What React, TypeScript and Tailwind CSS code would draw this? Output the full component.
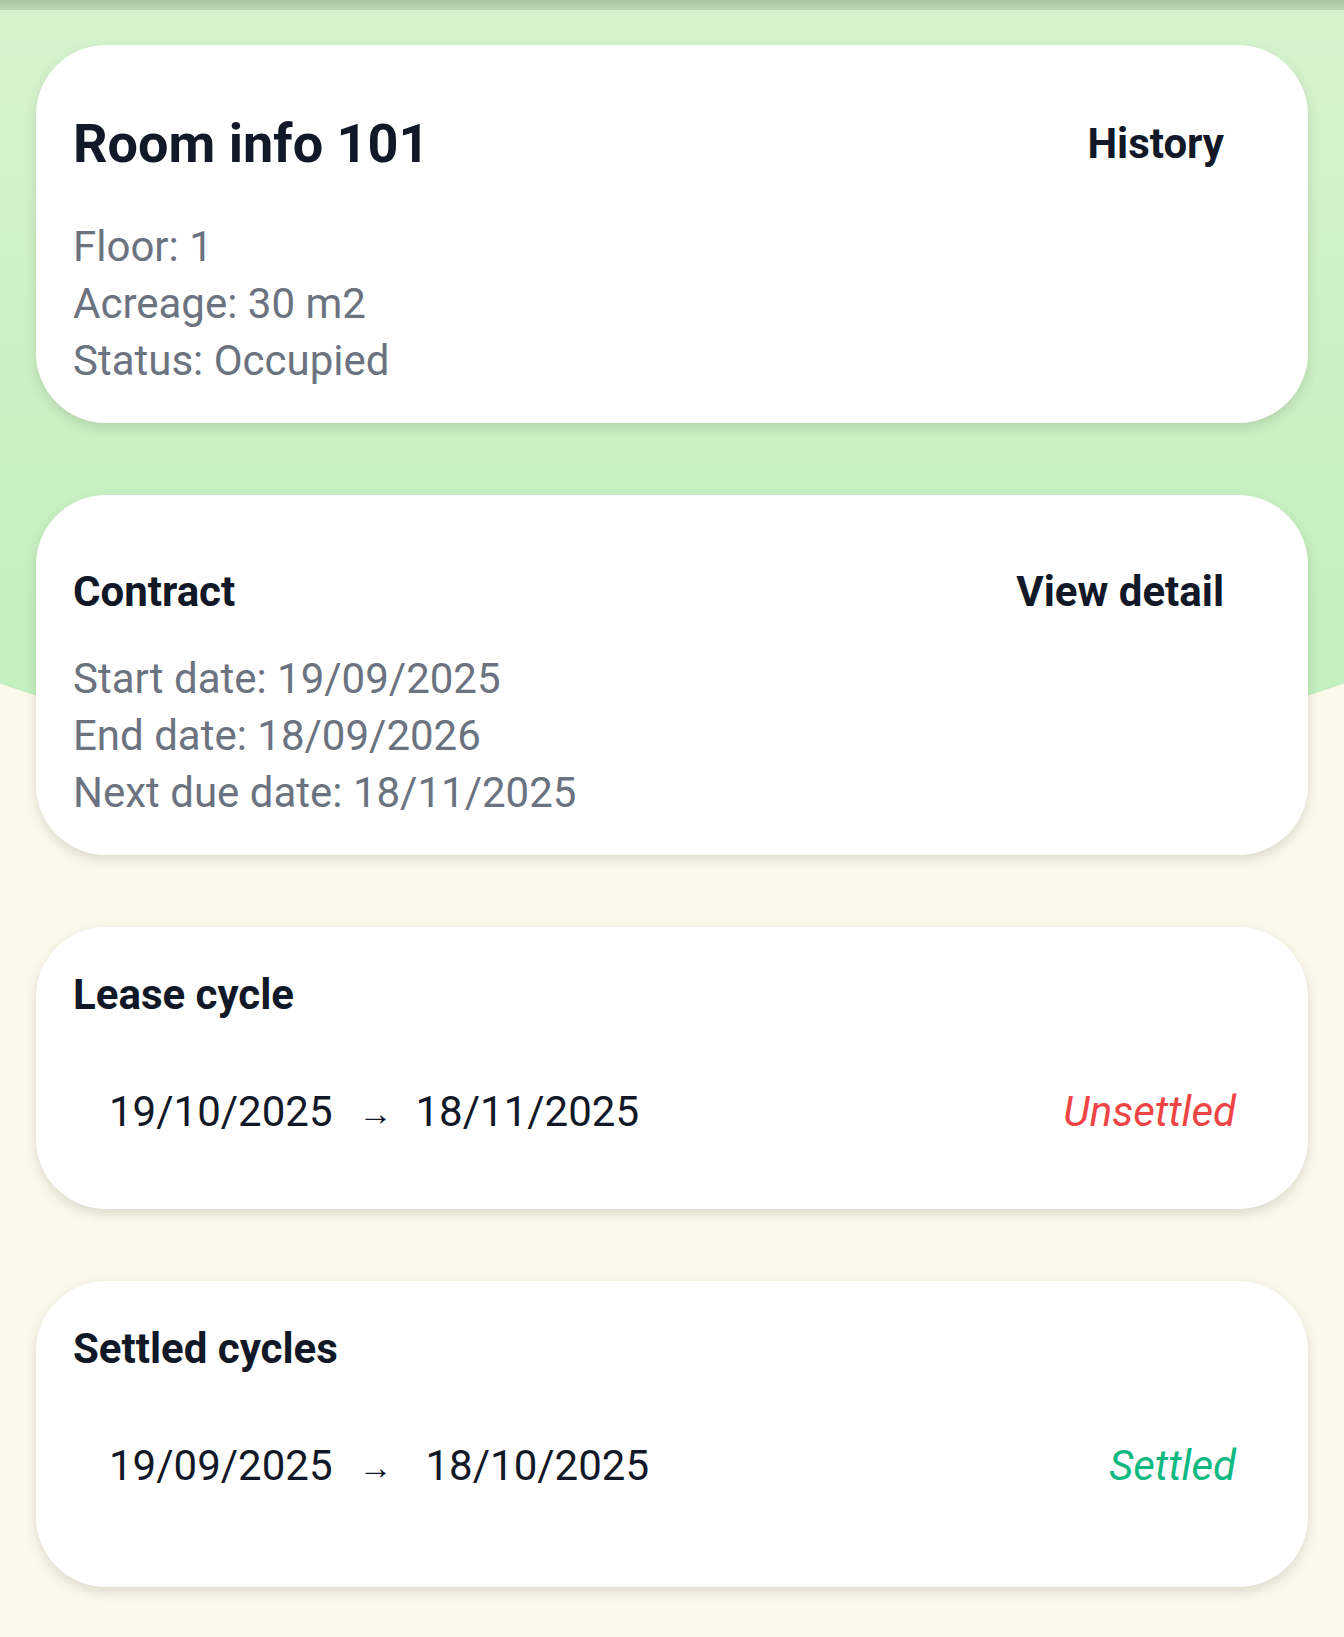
const font = { fontFamily: 'Roboto, "Noto Sans", sans-serif' }

function Card({ children, className = '' }: { children: React.ReactNode; className?: string }) {
  return (
    <div className={`rounded-[70px] bg-white px-[37px] shadow-[0_5px_12px_rgba(60,60,40,0.16)] ${className}`}>
      {children}
    </div>
  )
}

function CycleRow({ from, to, status, settled }: { from: string; to: string; status: string; settled?: boolean }) {
  return (
    <div className="flex items-center justify-between pl-[36px] pr-[35px] text-[42px] leading-[57px]">
      <div className="flex items-center text-[#111827]">
        <span>{from}</span>
        <span className="mt-[3px] mr-[23px] ml-[26px] text-[34px] leading-[40px]">→</span>
        <span className={settled ? 'ml-[10px]' : ''}>{to}</span>
      </div>
      <span className={`italic ${settled ? 'text-[#10b981]' : 'text-[#ef4444]'}`}>{status}</span>
    </div>
  )
}

export default function App() {
  const room = ['Floor: 1', 'Acreage: 30 m2', 'Status: Occupied']
  const contract = ['Start date: 19/09/2025', 'End date: 18/09/2026', 'Next due date: 18/11/2025']

  return (
    <div className="relative min-h-[1637px] overflow-hidden bg-[#fbf9ec]" style={font}>
      <div className="absolute top-0 left-[-228px] h-[778px] w-[1800px] rounded-b-[900px_282px] bg-gradient-to-b from-[#d6f3ce] to-[#c1eebd]" />
      <div className="absolute top-0 left-0 h-[10px] w-full bg-gradient-to-b from-[#a9c6a2] to-[#bdd9b6]" />

      <div className="relative flex flex-col gap-[72px] px-[36px] pt-[45px]">
        <Card className="pt-[67px] pb-[34px]">
          <div className="flex h-[64px] items-center justify-between pr-[47px]">
            <h1 className="text-[54px] leading-[64px] font-bold text-[#111827]">Room info 101</h1>
            <button className="text-[42px] leading-[64px] font-bold text-[#111827]">History</button>
          </div>
          <div className="mt-[42px] text-[42px] leading-[57px] text-[#6b7280]">
            {room.map((line) => (
              <div key={line}>{line}</div>
            ))}
          </div>
        </Card>

        <Card className="pt-[69px] pb-[34px]">
          <div className="flex h-[56px] items-center justify-between pr-[47px]">
            <h2 className="text-[42px] leading-[56px] font-bold text-[#111827]">Contract</h2>
            <button className="text-[42px] leading-[56px] font-bold text-[#111827]">View detail</button>
          </div>
          <div className="mt-[30px] text-[42px] leading-[57px] text-[#6b7280]">
            {contract.map((line) => (
              <div key={line}>{line}</div>
            ))}
          </div>
        </Card>

        <Card className="pt-[40px] pb-[69px]">
          <h2 className="text-[42px] leading-[56px] font-bold text-[#111827]">Lease cycle</h2>
          <div className="mt-[60px]">
            <CycleRow from="19/10/2025" to="18/11/2025" status="Unsettled" />
          </div>
        </Card>

        <Card className="pt-[40px] pb-[93px]">
          <h2 className="text-[42px] leading-[56px] font-bold text-[#111827]">Settled cycles</h2>
          <div className="mt-[60px]">
            <CycleRow from="19/09/2025" to="18/10/2025" status="Settled" settled />
          </div>
        </Card>
      </div>
    </div>
  )
}
